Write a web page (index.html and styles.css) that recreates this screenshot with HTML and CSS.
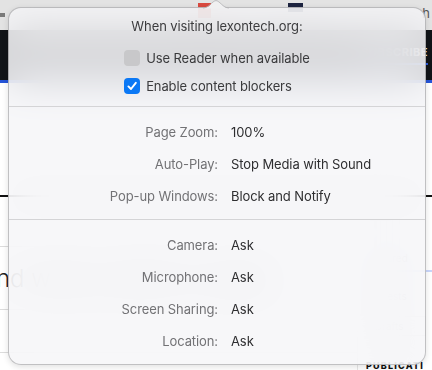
FILE: index.html
```html
<!DOCTYPE html>
<html lang="en">
<head>
    <meta charset="UTF-8" />
    <title>Website settings</title>
    <link rel="stylesheet" href="styles.css">
</head>
<body>
    <!-- Page behind the popover -->
    <div class="page">
        <div class="topbar">
            <span class="tb-icon grey"></span>
            <span class="tb-icon red"></span>
            <span class="tb-icon navy"></span>
            <span class="tb-letter">h</span>
        </div>
        <div class="masthead">
            <span class="subscribe">SUBSCRIBE</span>
        </div>
        <div class="blueline"></div>
        <div class="content">
            <div class="rule-black"></div>
            <div class="columns">
                <div class="main-col">
                    <div class="rule-grey"></div>
                    <h2 class="headline">nd what content is ready</h2>
                    <div class="rule-grey"></div>
                    <div class="rule-grey last"></div>
                </div>
                <aside class="side-col">
                    <div class="side-tab">Featured</div>
                    <div class="side-label">Interests</div>
                    <div class="side-box">Drafts</div>
                    <div class="side-pub">PUBLICATI</div>
                </aside>
            </div>
        </div>
    </div>

    <!-- Safari website settings popover -->
    <div class="popover">
        <svg class="arrow" width="26" height="9" viewBox="0 0 26 9">
            <path d="M0 8.5 C6 8.5 9.5 1 13 1 C16.5 1 20 8.5 26 8.5 Z" fill="#f0f0f1" />
            <path d="M0 8 C6 8 9.5 0.6 13 0.6 C16.5 0.6 20 8 26 8" fill="none" stroke="#b4b4b6" stroke-width="0.8" />
        </svg>

        <section class="site">
            <p class="title">When visiting lexontech.org:</p>
            <div class="checks">
                <label class="check"><span class="box"></span>Use Reader when available</label>
                <label class="check">
                    <span class="box on">
                        <svg width="12" height="12" viewBox="0 0 12 12"><path d="M2.4 6.4 L5 9 L9.8 2.8" fill="none" stroke="#fff" stroke-width="1.9" stroke-linecap="round" stroke-linejoin="round" /></svg>
                    </span>Enable content blockers
                </label>
            </div>
        </section>

        <dl class="prefs">
            <dt>Page Zoom:</dt><dd>100%</dd>
            <dt>Auto-Play:</dt><dd>Stop Media with Sound</dd>
            <dt>Pop-up Windows:</dt><dd>Block and Notify</dd>
        </dl>

        <dl class="prefs last">
            <dt>Camera:</dt><dd>Ask</dd>
            <dt>Microphone:</dt><dd>Ask</dd>
            <dt>Screen Sharing:</dt><dd>Ask</dd>
            <dt>Location:</dt><dd>Ask</dd>
        </dl>
    </div>
</body>
</html>
```

FILE: styles.css
```css
* {
    box-sizing: border-box;
    margin: 0;
    padding: 0;
}

body {
    width: 432px;
    height: 370px;
    overflow: hidden;
    background: #fff;
    font-family: Inter, "Noto Sans", sans-serif;
    position: relative;
}

/* Page behind */
.topbar {
    height: 30px;
    background: #e3e3e3;
    display: flex;
    align-items: flex-start;
}

.tb-icon {
    display: block;
}

.tb-icon.grey {
    width: 5px;
    height: 4px;
    background: #7a7a7a;
    margin: 13px 0 0 0;
}

.tb-icon.red {
    width: 13px;
    height: 15px;
    background: #d9493f;
    margin: 3px 0 0 193px;
}

.tb-icon.navy {
    width: 15px;
    height: 9px;
    background: #1d2440;
    margin: 3px 0 0 77px;
}

.tb-letter {
    margin: 5px 0 0 auto;
    padding-right: 2px;
    font-size: 13px;
    color: #555;
}

.masthead {
    height: 50px;
    background: #111418;
    display: flex;
    justify-content: flex-end;
    align-items: center;
    overflow: hidden;
}

.subscribe {
    color: #fff;
    font-size: 11px;
    font-weight: 700;
    letter-spacing: 0.5px;
    margin-right: 4px;
    padding-bottom: 4px;
    border-bottom: 2px solid #2b5be0;
}

.blueline {
    height: 3px;
    background: #2554d8;
}

.content {
    padding-top: 112px;
}

.rule-black {
    height: 2px;
    background: #111;
}

.columns {
    display: grid;
    grid-template-columns: 1fr 75px;
}

.main-col {
    padding-top: 49px;
    overflow: hidden;
}

.rule-grey {
    height: 1px;
    background: #dcdcdc;
}

.rule-grey.last {
    margin-top: 42px;
}

.headline {
    font-size: 24px;
    font-weight: 300;
    color: #222;
    height: 62px;
    line-height: 64px;
    margin-left: -4px;
    white-space: nowrap;
}

.side-col {
    border-left: 1px solid #e6e6e6;
    padding: 55px 0 0 8px;
    font-size: 10px;
    color: #555;
    overflow: hidden;
}

.side-tab {
    padding-bottom: 6px;
    border-bottom: 2px solid #c9d6fb;
    margin-bottom: 18px;
}

.side-label {
    margin-bottom: 14px;
}

.side-box {
    border: 1px solid #ddd;
    padding: 3px 8px;
    width: 60px;
}

.side-pub {
    margin-top: 24px;
    font-size: 9px;
    font-weight: 800;
    letter-spacing: 1.2px;
    color: #111;
    white-space: nowrap;
}

/* Popover */
.popover {
    position: absolute;
    left: 8px;
    top: 7px;
    width: 418px;
    background: rgba(246, 246, 248, 0.86);
    backdrop-filter: blur(20px);
    border: 1px solid rgba(0, 0, 0, 0.22);
    border-radius: 13px;
    box-shadow: 0 2px 6px rgba(0, 0, 0, 0.12);
    color: #2a2a2c;
    font-size: 13px;
    letter-spacing: -0.1px;
}

.arrow {
    position: absolute;
    top: -8px;
    left: 194px;
    display: block;
}

.site {
    padding: 8px 0 6px;
    border-bottom: 1px solid #d4d4d6;
    display: flex;
    flex-direction: column;
    align-items: center;
}

.title {
    line-height: 20px;
    color: #3c3c3e;
    margin-bottom: 8px;
}

.checks {
    display: flex;
    flex-direction: column;
    align-items: flex-start;
}

.check {
    height: 28px;
    display: flex;
    align-items: center;
    gap: 6px;
    color: #3a3a3c;
}

.box {
    width: 16px;
    height: 16px;
    border-radius: 4px;
    background: #c8c8ca;
    display: flex;
    align-items: center;
    justify-content: center;
}

.box.on {
    background: #0b78f5;
}

.prefs {
    display: grid;
    grid-template-columns: 209px 1fr;
    column-gap: 13px;
    grid-auto-rows: 32px;
    align-items: center;
    padding: 9px 0 7px;
    border-bottom: 1px solid #d4d4d6;
}

.prefs.last {
    border-bottom: none;
    padding-bottom: 7px;
}

.prefs dt {
    text-align: right;
    color: #727275;
}

.prefs dd {
    color: #2e2e30;
}
```
